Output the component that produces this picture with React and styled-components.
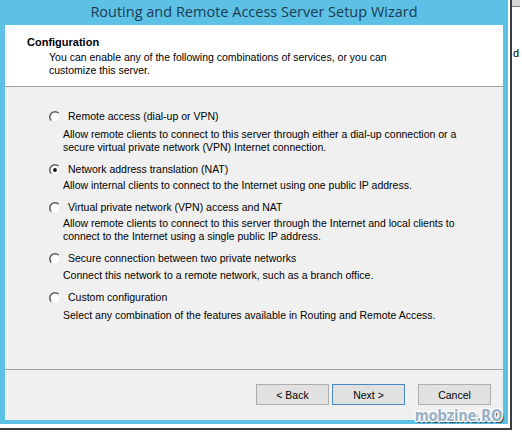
import React from 'react';
import styled, { createGlobalStyle } from 'styled-components';

const Global = createGlobalStyle`
  html, body { margin: 0; padding: 0; background: #fff; }
  body { font-family: "Liberation Sans", Arial, sans-serif; color: #000; }
`;

const Stage = styled.div`
  position: relative;
  width: 522px;
  height: 432px;
  display: flex;
  align-items: flex-start;
  overflow: hidden;
  background: #fff;
`;

const ShadowBox = styled.div`
  padding: 0 2px 4px 0;
  border-right: 2px solid #3c3c3c;
  border-bottom: 2px solid #3c3c3c;
  background: #fff;
`;

const Window = styled.div`
  width: 508px;
  height: 424px;
  box-sizing: border-box;
  background: #5cc1e4;
  padding: 0 5px 4px 5px;
  display: flex;
  flex-direction: column;
`;

const TitleBar = styled.div`
  height: 25px;
  display: flex;
  align-items: center;
  justify-content: center;
  font-family: "Open Sans", "Noto Sans", sans-serif;
  font-size: 14.5px;
  color: #1d3b52;
  padding-bottom: 2px;
  box-sizing: border-box;
`;

const Inner = styled.div`
  flex: 1;
  display: flex;
  flex-direction: column;
  background: #f0f0f0;
`;

const Header = styled.div`
  height: 62px;
  box-sizing: border-box;
  background: #fff;
  border-bottom: 1px solid #a0a0a0;
  padding: 11px 0 0 22px;
`;

const HeaderTitle = styled.div`
  font-size: 11px;
  font-weight: bold;
  line-height: 13px;
`;

const HeaderText = styled.div`
  font-size: 10.5px;
  line-height: 13px;
  margin: 2px 0 0 22px;
  width: 380px;
`;

const Body = styled.div`
  flex: 1;
  padding: 23px 0 0 44px;
  display: flex;
  flex-direction: column;
  gap: 9px;
`;

const Option = styled.div`
  display: flex;
  flex-direction: column;
`;

const OptionLabel = styled.label`
  display: flex;
  align-items: center;
  gap: 7px;
  font-size: 10.5px;
  line-height: 13px;
`;

const OptionDesc = styled.div`
  font-size: 10.5px;
  line-height: 13px;
  margin: ${p => p.$gap}px 0 0 14px;
  width: 420px;
`;

const Footer = styled.div`
  height: 51px;
  box-sizing: border-box;
  border-top: 1px solid #a0a0a0;
  display: flex;
  justify-content: flex-end;
  align-items: flex-start;
  padding: 14px 12px 0 0;
`;

const Button = styled.button`
  width: 73px;
  height: 21px;
  margin-left: ${p => p.$gapLeft}px;
  box-sizing: border-box;
  border: 1px solid ${p => (p.$default ? '#4a8ac0' : '#adadad')};
  background: #e1e1e1;
  font-family: "Liberation Sans", Arial, sans-serif;
  font-size: 10.5px;
  color: #000;
  padding: 0;
`;

const SideStrip = styled.div`
  flex: 1;
  height: 432px;
  display: flex;
  flex-direction: column;
  background: #fff;
`;

const SideTop = styled.div`
  height: 6px;
  background: #d8d8d8;
  border-bottom: 1px solid #7a7a7a;
  margin-right: 2px;
`;

const SideLetter = styled.div`
  margin-top: 40px;
  padding-left: 1px;
  font-size: 11px;
  line-height: 13px;
`;

const Watermark = styled.div`
  position: absolute;
  right: 20px;
  bottom: 7px;
  font-family: "DejaVu Sans Condensed", "DejaVu Sans", sans-serif;
  font-weight: bold;
  font-size: 15px;
  line-height: 17px;
  letter-spacing: -0.4px;
  color: #98b3c7;
  text-shadow:
    -1px -1px 0 #fff, 1px -1px 0 #fff, -1px 1px 0 #fff, 1px 1px 0 #fff,
    0 -1px 0 #fff, 0 1px 0 #fff, -1px 0 0 #fff, 1px 0 0 #fff,
    2px 2px 1px #3a3a3a;
`;

function Radio({ checked }) {
  return (
    <svg width="12" height="12" viewBox="0 0 12 12" style={{ flex: 'none' }}>
      <circle cx="6" cy="6" r="5.2" fill="#fff" />
      <path d="M2.3 9.7 A5.2 5.2 0 0 1 9.7 2.3" fill="none" stroke="#5a5a5a" strokeWidth="1.5" />
      <path d="M9.7 2.3 A5.2 5.2 0 0 1 2.3 9.7" fill="none" stroke="#e8e8e8" strokeWidth="1" />
      {checked && <circle cx="6" cy="6" r="1.9" fill="#111" />}
    </svg>
  );
}

const options = [
  {
    label: 'Remote access (dial-up or VPN)',
    desc: 'Allow remote clients to connect to this server through either a dial-up connection or a secure virtual private network (VPN) Internet connection.',
    gap: 5,
  },
  {
    label: 'Network address translation (NAT)',
    desc: 'Allow internal clients to connect to the Internet using one public IP address.',
    checked: true,
    gap: 3,
  },
  {
    label: 'Virtual private network (VPN) access and NAT',
    desc: 'Allow remote clients to connect to this server through the Internet and local clients to connect to the Internet using a single public IP address.',
    gap: 3,
  },
  {
    label: 'Secure connection between two private networks',
    desc: 'Connect this network to a remote network, such as a branch office.',
    gap: 4,
  },
  {
    label: 'Custom configuration',
    desc: 'Select any combination of the features available in Routing and Remote Access.',
    gap: 5,
  },
];

export default function App() {
  return (
    <Stage>
      <Global />
      <ShadowBox>
        <Window>
          <TitleBar>Routing and Remote Access Server Setup Wizard</TitleBar>
          <Inner>
            <Header>
              <HeaderTitle>Configuration</HeaderTitle>
              <HeaderText>
                You can enable any of the following combinations of services, or you can customize this server.
              </HeaderText>
            </Header>
            <Body>
              {options.map(o => (
                <Option key={o.label}>
                  <OptionLabel>
                    <Radio checked={o.checked} />
                    {o.label}
                  </OptionLabel>
                  <OptionDesc $gap={o.gap}>{o.desc}</OptionDesc>
                </Option>
              ))}
            </Body>
            <Footer>
              <Button $gapLeft={0}>&lt; Back</Button>
              <Button $gapLeft={3} $default>Next &gt;</Button>
              <Button $gapLeft={13}>Cancel</Button>
            </Footer>
          </Inner>
        </Window>
      </ShadowBox>
      <SideStrip>
        <SideTop />
        <SideLetter>d</SideLetter>
      </SideStrip>
      <Watermark>mobzine.RO</Watermark>
    </Stage>
  );
}
